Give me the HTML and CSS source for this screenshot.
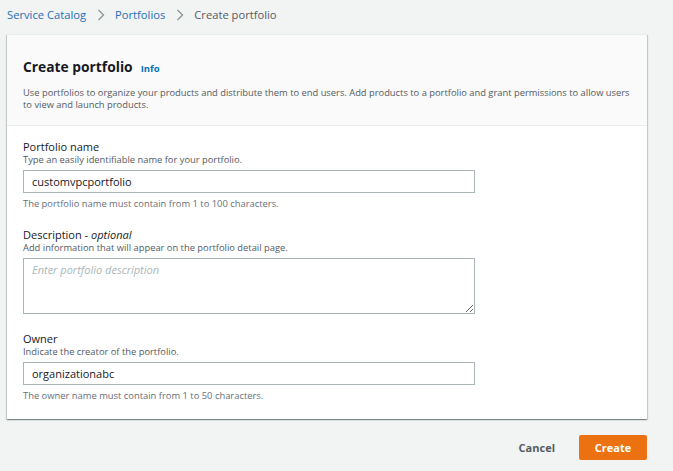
FILE: index.html
```html
<!DOCTYPE html>
<html>
<head>
<meta charset="utf-8">
<link rel="stylesheet" href="styles.css">
</head>
<body>
<div class="page">
  <nav class="crumbs">
    <a class="crumb-link">Service Catalog</a>
    <svg class="chev" width="8" height="12" viewBox="0 0 8 12"><path d="M1.5 1 L6.5 6 L1.5 11" fill="none" stroke="#879596" stroke-width="1.3"/></svg>
    <a class="crumb-link">Portfolios</a>
    <svg class="chev" width="8" height="12" viewBox="0 0 8 12"><path d="M1.5 1 L6.5 6 L1.5 11" fill="none" stroke="#879596" stroke-width="1.3"/></svg>
    <span class="crumb-current">Create portfolio</span>
  </nav>
  <section class="card">
    <header class="card-head">
      <h1 class="title">Create portfolio <a class="info">Info</a></h1>
      <p class="desc">Use portfolios to organize your products and distribute them to end users. Add products to a portfolio and grant permissions to allow users to view and launch products.</p>
    </header>
    <div class="card-body">
      <div class="field">
        <div class="label">Portfolio name</div>
        <div class="hint">Type an easily identifiable name for your portfolio.</div>
        <input class="input" type="text" value="customvpcportfolio">
        <div class="constraint">The portfolio name must contain from 1 to 100 characters.</div>
      </div>
      <div class="field">
        <div class="label">Description - <i>optional</i></div>
        <div class="hint">Add information that will appear on the portfolio detail page.</div>
        <textarea class="textarea" placeholder="Enter portfolio description"></textarea>
      </div>
      <div class="field">
        <div class="label">Owner</div>
        <div class="hint">Indicate the creator of the portfolio.</div>
        <input class="input" type="text" value="organizationabc">
        <div class="constraint">The owner name must contain from 1 to 50 characters.</div>
      </div>
    </div>
  </section>
  <div class="actions">
    <button class="btn-cancel">Cancel</button>
    <button class="btn-create">Create</button>
  </div>
</div>
</body>
</html>
```
FILE: styles.css
```css
html, body {
  margin: 0;
  padding: 0;
  background: #f2f3f3;
  font-family: "Open Sans", "Noto Sans", sans-serif;
  color: #16191f;
}
.page {
  padding: 0 26px 0 7px;
  width: 640px;
}
.crumbs {
  display: flex;
  align-items: center;
  height: 29px;
  font-size: 11.2px;
  gap: 10.5px;
}
.crumb-link { color: #1f6fb5; }
.crumb-current { color: #545b64; }
.chev { display: block; }
.card {
  margin-top: 5px;
  background: #fff;
  border-top: 1px solid #eaeded;
  box-shadow: 0 1px 1px 0 rgba(0,28,36,0.3), 1px 1px 1px 0 rgba(0,28,36,0.15), -1px 1px 1px 0 rgba(0,28,36,0.15);
}
.card-head {
  background: #fafafa;
  border-bottom: 1px solid #eaeded;
  padding: 21px 16px 14px 16px;
}
.title {
  margin: 0;
  font-size: 13.8px;
  font-weight: 700;
  line-height: 22px;
  display: flex;
  align-items: baseline;
  gap: 8px;
}
.info {
  font-size: 9.5px;
  color: #0073bb;
  font-weight: 700;
}
.desc {
  margin: 7px 0 0 0;
  font-size: 9.35px;
  line-height: 12px;
  color: #545b64;
}
.card-body {
  padding: 14px 16px 17px 16px;
}
.field { margin-bottom: 18px; }
.field:last-child { margin-bottom: 0; }
.label {
  font-size: 11px;
  line-height: 14px;
}
.label i { font-style: italic; }
.hint {
  font-size: 9.35px;
  line-height: 12px;
  color: #545b64;
}
.input {
  display: block;
  box-sizing: border-box;
  margin-top: 4px;
  width: 452px;
  height: 23px;
  border: 1px solid #aab7b8;
  padding: 0 8px;
  font-family: inherit;
  font-size: 11px;
  color: #16191f;
  background: #fff;
}
.textarea {
  display: block;
  box-sizing: border-box;
  margin-top: 4px;
  width: 452px;
  height: 56px;
  border: 1px solid #aab7b8;
  padding: 3px 8px;
  font-family: inherit;
  font-size: 11px;
  font-style: italic;
  resize: vertical;
}
.textarea::placeholder { color: #aab7b8; font-style: italic; }
.constraint {
  margin-top: 5px;
  font-size: 9.4px;
  line-height: 12px;
  color: #687078;
}
.actions {
  display: flex;
  justify-content: flex-end;
  align-items: center;
  gap: 24px;
  margin-top: 16px;
}
.btn-cancel {
  border: 0;
  background: transparent;
  font-family: inherit;
  font-weight: 700;
  font-size: 11px;
  color: #545b64;
  padding: 0;
}
.btn-create {
  border: 0;
  background: #ec7211;
  color: #fff;
  font-family: inherit;
  font-weight: 700;
  font-size: 11px;
  width: 68px;
  height: 25px;
  border-radius: 2px;
  padding: 0;
}
```
